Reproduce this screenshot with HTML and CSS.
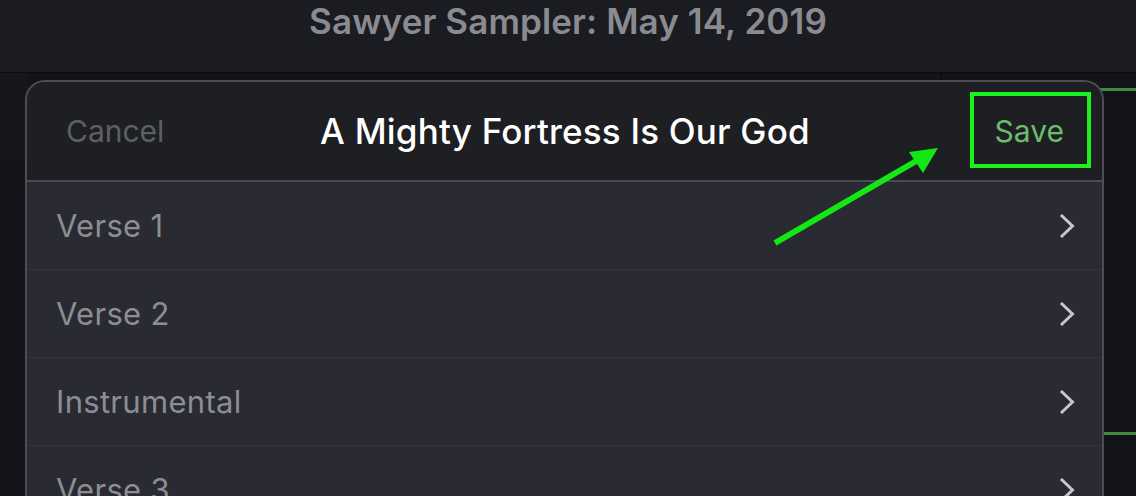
FILE: index.html
```html
<!DOCTYPE html>
<html>
<head>
    <link rel="stylesheet" href="styles.css">
</head>
<body>
    <div class="topbar">
        <h1 class="topbar-title">Sawyer Sampler: May 14, 2019</h1>
    </div>
    <div class="backdrop">
        <div class="backdrop-side"></div>
        <div class="backdrop-divider"></div>
        <div class="accent accent-top"></div>
        <div class="accent accent-mid"></div>
    </div>

    <!-- Edit sheet -->
    <div class="sheet">
        <div class="sheet-header">
            <span class="sheet-cancel">Cancel</span>
            <span class="sheet-title">A Mighty Fortress Is Our God</span>
            <span class="sheet-save">Save</span>
        </div>
        <ul class="sheet-list">
            <li class="sheet-row"><span>Verse 1</span><svg class="chevron" viewBox="0 0 16 26"><polyline points="2,2 13.5,13 2,24"/></svg></li>
            <li class="sheet-row"><span>Verse 2</span><svg class="chevron" viewBox="0 0 16 26"><polyline points="2,2 13.5,13 2,24"/></svg></li>
            <li class="sheet-row"><span>Instrumental</span><svg class="chevron" viewBox="0 0 16 26"><polyline points="2,2 13.5,13 2,24"/></svg></li>
            <li class="sheet-row"><span>Verse 3</span><svg class="chevron" viewBox="0 0 16 26"><polyline points="2,2 13.5,13 2,24"/></svg></li>
        </ul>
    </div>

    <!-- Annotation -->
    <div class="highlight-box"></div>
    <svg class="arrow" width="1136" height="496" viewBox="0 0 1136 496">
        <line x1="775" y1="243" x2="918" y2="160" />
        <polygon points="938,148 909,152 923,173" />
    </svg>
</body>
</html>
```

FILE: styles.css
```css
    body {
        margin: 0;
        background-color: #12141a;
        font-family: Inter, "Noto Sans", sans-serif;
        height: 496px;
        overflow: hidden;
        position: relative;
    }

    .topbar {
        height: 72px;
        background-color: #1a1c22;
        border-bottom: 1px solid #0b0c10;
        display: flex;
        justify-content: center;
    }

    .topbar-title {
        margin: 0;
        padding-top: 0;
        font-size: 35px;
        line-height: 42px;
        font-weight: 600;
        color: #8a8b90;
        letter-spacing: 0.1px;
    }

    .backdrop {
        display: flex;
        height: 423px;
    }

    .backdrop-side {
        width: 26px;
        height: 86px;
        background-color: #15171d;
    }

    .backdrop-divider {
        margin-left: 914px;
        width: 2px;
        height: 8px;
        background-color: #0a0b0e;
    }

    .accent {
        position: absolute;
        right: 0;
        height: 3px;
        background-color: #4a8449;
    }

    .accent-top {
        top: 88px;
        width: 38px;
    }

    .accent-mid {
        top: 432px;
        width: 32px;
    }

    .sheet {
        position: absolute;
        left: 25px;
        top: 80px;
        width: 1075px;
        height: 460px;
        border: 2px solid #4d4e54;
        border-bottom: none;
        border-radius: 20px 20px 0 0;
        background-color: #2a2a32;
        overflow: hidden;
    }

    .sheet-header {
        height: 98px;
        background-color: #1e1f23;
        border-bottom: 2px solid #4a4b50;
        display: grid;
        grid-template-columns: 1fr auto 1fr;
        align-items: center;
        padding: 0 38px 0 39px;
    }

    .sheet-cancel {
        font-size: 30px;
        color: #5e5f66;
    }

    .sheet-title {
        font-size: 35px;
        font-weight: 500;
        color: #ffffff;
        letter-spacing: 0.2px;
    }

    .sheet-save {
        justify-self: end;
        font-size: 30px;
        color: #6cbc6c;
    }

    .sheet-list {
        list-style: none;
        margin: 0;
        padding: 0;
    }

    .sheet-row {
        height: 87px;
        border-bottom: 1px solid #34353d;
        display: flex;
        align-items: center;
        justify-content: space-between;
        padding: 0 27px 0 29px;
        font-size: 31px;
        color: #8c8d95;
        letter-spacing: 0.3px;
    }

    .chevron {
        width: 16px;
        height: 26px;
        fill: none;
        stroke: #c6c6cb;
        stroke-width: 3;
    }

    .highlight-box {
        position: absolute;
        left: 970px;
        top: 92px;
        width: 113px;
        height: 68px;
        border: 4px solid #1ef21e;
    }

    .arrow {
        position: absolute;
        left: 0;
        top: 0;
    }

    .arrow line {
        stroke: #14e814;
        stroke-width: 6;
    }

    .arrow polygon {
        fill: #14e814;
    }
```
